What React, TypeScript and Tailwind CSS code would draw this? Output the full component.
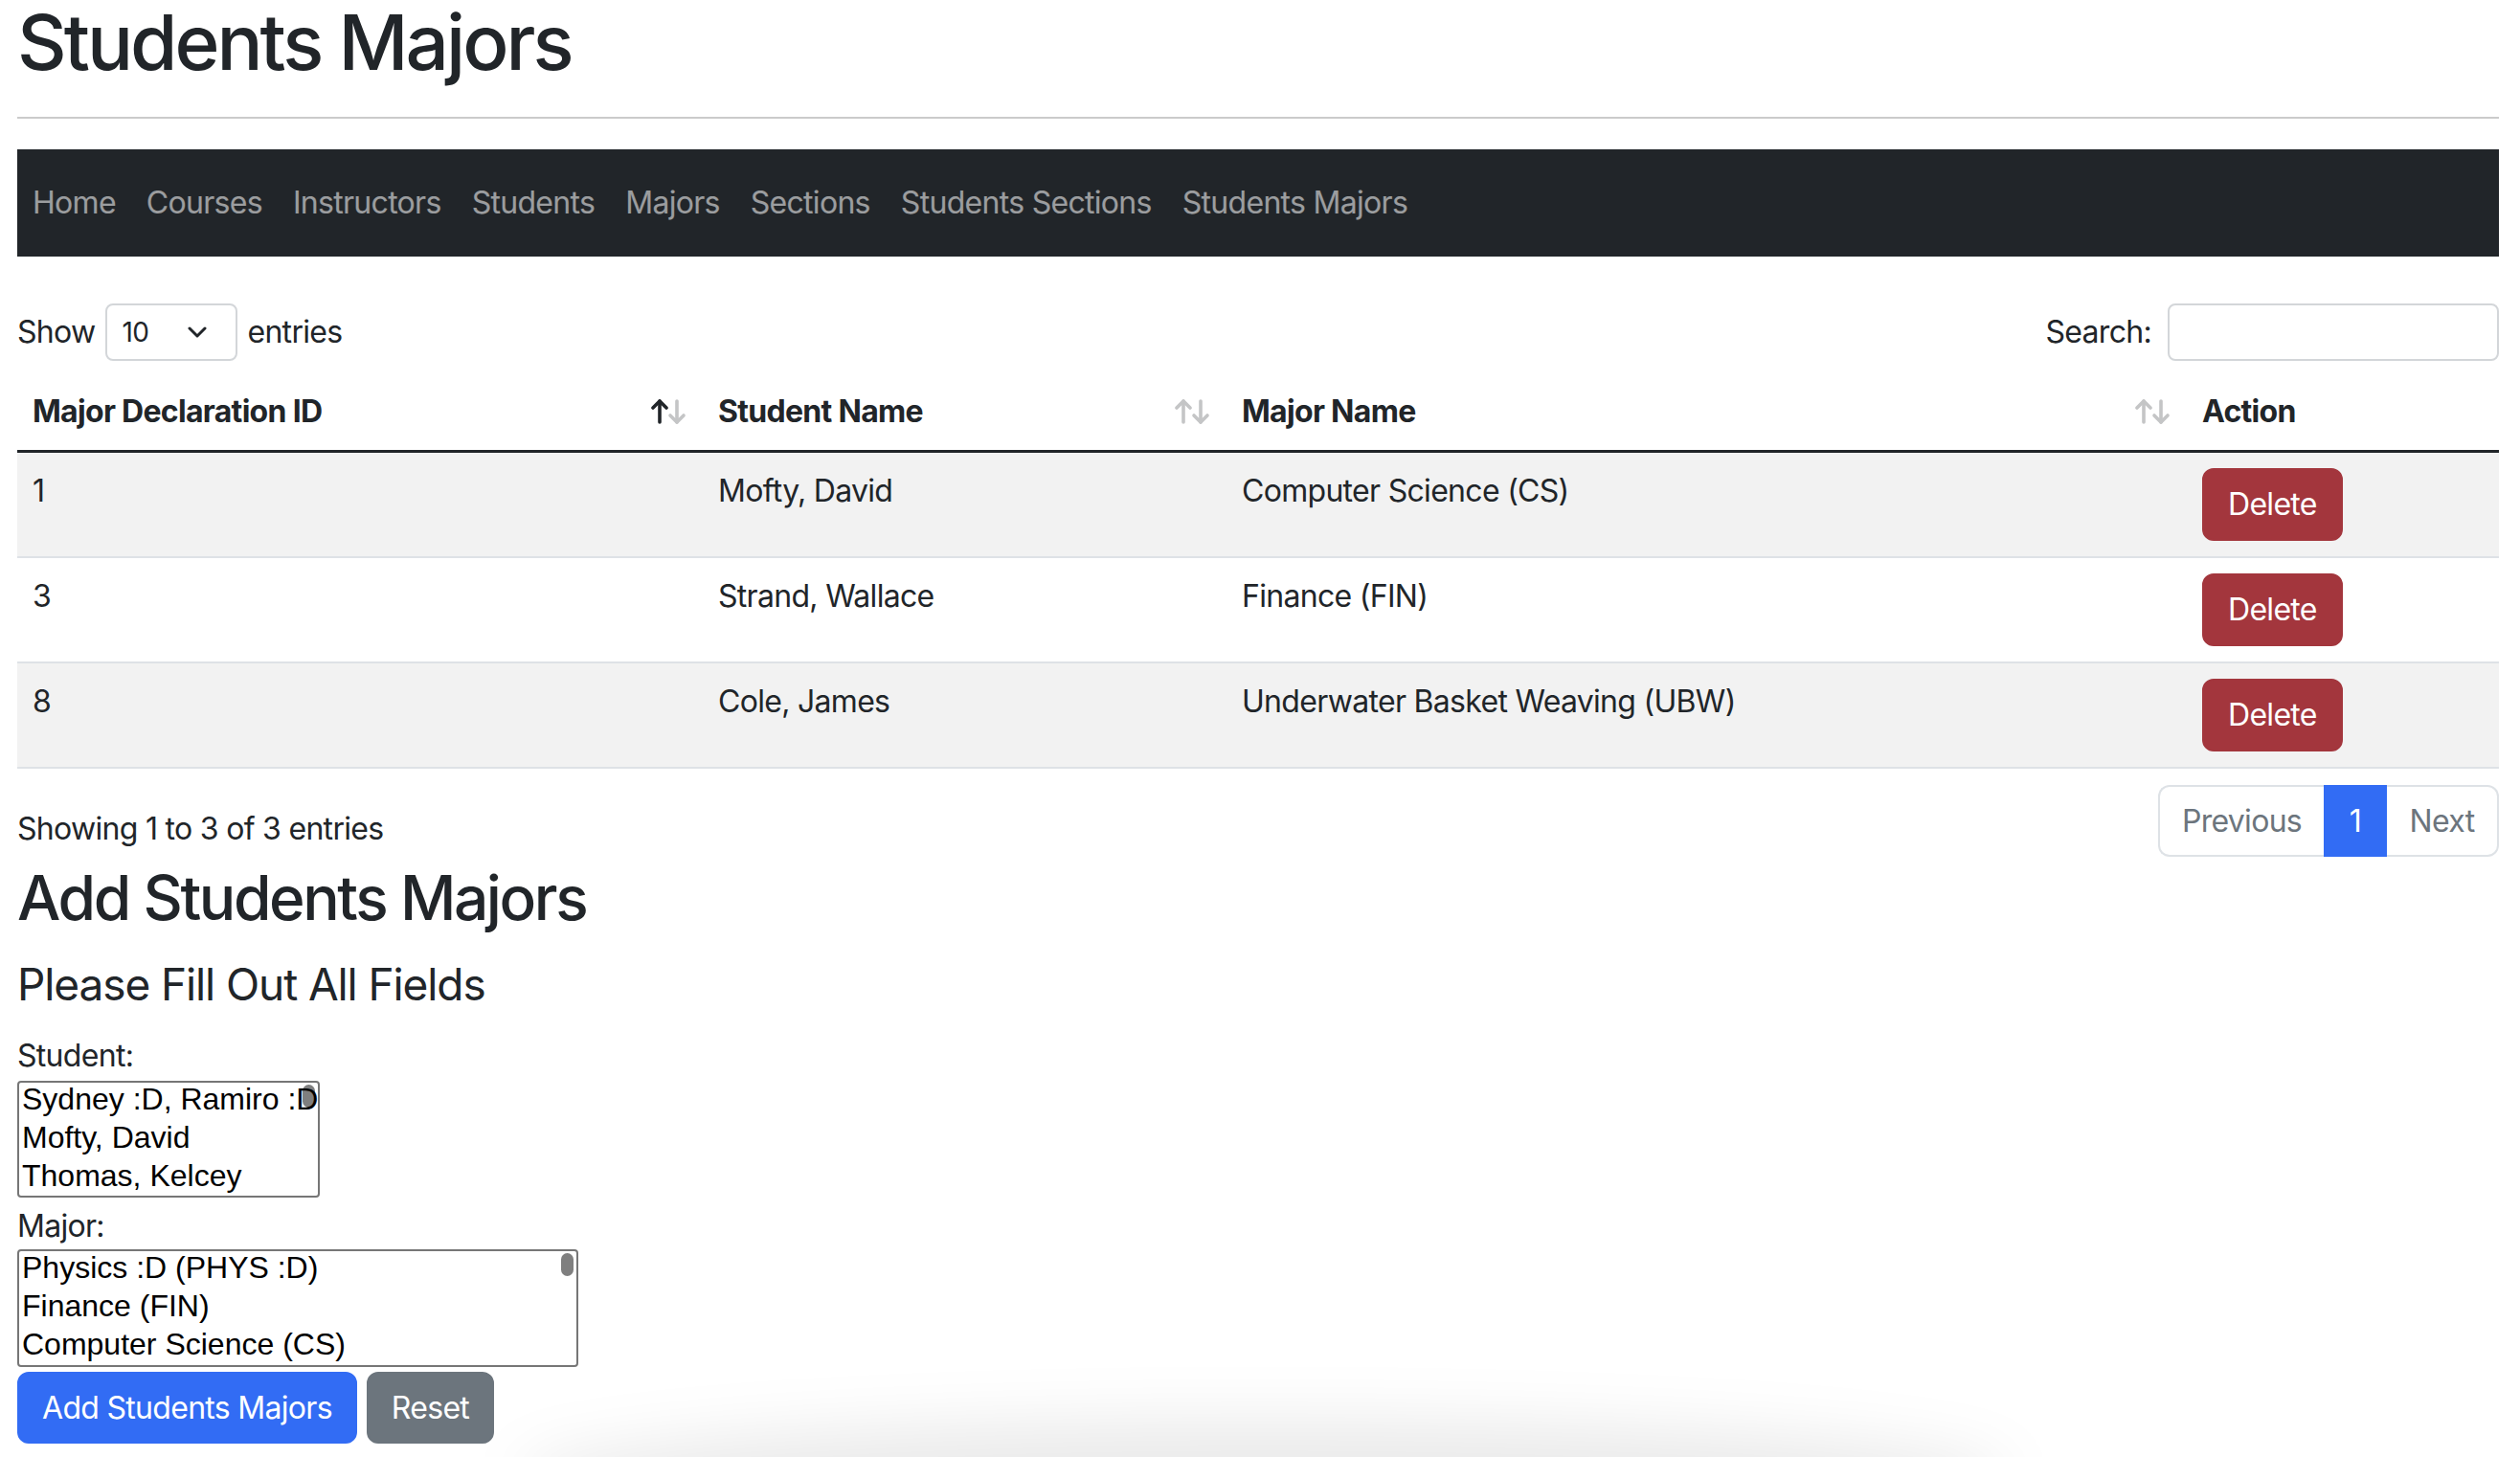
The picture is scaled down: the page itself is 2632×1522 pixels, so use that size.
import React from 'react';

const navLinks = ['Home', 'Courses', 'Instructors', 'Students', 'Majors', 'Sections', 'Students Sections', 'Students Majors'];

const rows = [
  { id: '1', student: 'Mofty, David', major: 'Computer Science (CS)' },
  { id: '3', student: 'Strand, Wallace', major: 'Finance (FIN)' },
  { id: '8', student: 'Cole, James', major: 'Underwater Basket Weaving (UBW)' },
];

const students = ['Sydney :D, Ramiro :D', 'Mofty, David', 'Thomas, Kelcey'];
const majors = ['Physics :D (PHYS :D)', 'Finance (FIN)', 'Computer Science (CS)'];

const SortIcon: React.FC<{ active?: boolean }> = ({ active }) => (
  <svg width="38" height="28" viewBox="0 0 38 28" fill="none" strokeWidth="3.6" strokeLinecap="round" strokeLinejoin="round">
    <g stroke={active ? '#212529' : '#c4c5c6'}>
      <path d="M9 25V3" />
      <path d="M2 10L9 3L16 10" />
    </g>
    <g stroke="#c4c5c6">
      <path d="M27 3V25" />
      <path d="M20 18L27 25L34 18" />
    </g>
  </svg>
);

const ListBox: React.FC<{ items: string[]; width: string; height: string }> = ({ items, width, height }) => (
  <div className={`relative ${width} ${height} overflow-hidden rounded-[4px] border-2 border-[#767676] bg-white pl-[3px] font-['Liberation_Sans',Arial,sans-serif] text-[32px] leading-[40px] tracking-normal text-black`}>
    <div className="absolute right-[3px] top-[2px] h-[24px] w-[13px] rounded-full bg-[#7f7f7f]" />
    <div className="relative -top-[3px]">
      {items.map((s) => (
        <div key={s} className="whitespace-nowrap">{s}</div>
      ))}
    </div>
  </div>
);

export default function App() {
  return (
    <div className="relative min-h-[1522px] overflow-hidden bg-white pl-[18px] pr-[22px] font-['Inter','Noto_Sans',sans-serif] text-[32px] leading-[48px] tracking-[-0.7px] text-[#212529]">
      <h1 className="text-[80px] font-medium leading-[88px] tracking-[-3px]">Students Majors</h1>
      <div className="mt-[34px] h-[2px] bg-[#cbcbcb]" />

      <nav className="mt-[32px] flex h-[112px] items-center bg-[#212529]">
        {navLinks.map((l) => (
          <a key={l} className="px-[16px] text-white/55">{l}</a>
        ))}
      </nav>

      <div className="mt-[49px] flex h-[60px] items-center justify-between">
        <div className="flex items-center">
          <span>Show</span>
          <div className="ml-[11px] mr-[10px] flex h-[60px] w-[138px] items-center justify-between rounded-[8px] border-2 border-[#d3d6d9] pl-[15px] pr-[30px] text-[28px]">
            <span>10</span>
            <svg width="20" height="12" viewBox="0 0 20 12" fill="none" stroke="#212529" strokeWidth="3" strokeLinecap="round" strokeLinejoin="round">
              <path d="M2 2L10 10L18 2" />
            </svg>
          </div>
          <span>entries</span>
        </div>
        <div className="flex items-center">
          <span>Search:</span>
          <div className="ml-[17px] h-[60px] w-[346px] rounded-[8px] border-2 border-[#d3d6d9]" />
        </div>
      </div>

      <table className="mt-[13px] w-full table-fixed border-collapse">
        <thead>
          <tr className="border-b-[3px] border-[#212529]">
            <th className="w-[716px] p-[16px] text-left font-bold">
              <div className="flex items-center justify-between">
                <span>Major Declaration ID</span>
                <SortIcon active />
              </div>
            </th>
            <th className="w-[547px] p-[16px] text-left font-bold">
              <div className="flex items-center justify-between">
                <span>Student Name</span>
                <SortIcon />
              </div>
            </th>
            <th className="w-[1003px] p-[16px] text-left font-bold">
              <div className="flex items-center justify-between">
                <span>Major Name</span>
                <SortIcon />
              </div>
            </th>
            <th className="p-[16px] text-left font-bold">Action</th>
          </tr>
        </thead>
        <tbody>
          {rows.map((r, i) => (
            <tr key={r.id} className={`border-b-2 border-[#dee2e6] ${i % 2 === 0 ? 'bg-[#f2f2f2]' : 'bg-white'}`}>
              <td className="p-[16px] align-top">{r.id}</td>
              <td className="p-[16px] align-top">{r.student}</td>
              <td className="p-[16px] align-top">{r.major}</td>
              <td className="p-[16px] align-top">
                <button className="h-[76px] rounded-[12px] border-2 border-[#a3363d] bg-[#a3363d] px-[25px] text-white">Delete</button>
              </td>
            </tr>
          ))}
        </tbody>
      </table>

      <div className="flex items-start justify-between">
        <div className="pt-[39px]">Showing 1 to 3 of 3 entries</div>
        <div className="mt-[17px] flex h-[75px]">
          <div className="flex w-[173px] items-center justify-center rounded-l-[12px] border-2 border-r-0 border-[#dee2e6] text-[#6c757d]">Previous</div>
          <div className="flex w-[66px] items-center justify-center bg-[#326cf4] text-white">1</div>
          <div className="flex w-[117px] items-center justify-center rounded-r-[12px] border-2 border-l-0 border-[#dee2e6] text-[#6c757d]">Next</div>
        </div>
      </div>

      <h2 className="mt-[4px] text-[64px] font-medium leading-[77px] tracking-[-2.4px]">Add Students Majors</h2>
      <h4 className="mt-[25px] text-[46px] font-normal leading-[55px] tracking-[-1.1px]">Please Fill Out All Fields</h4>

      <div className="mt-[23px]">Student:</div>
      <div className="mt-[2px]">
        <ListBox items={students} width="w-[316px]" height="h-[122px]" />
      </div>
      <div className="mt-[6px]">Major:</div>
      <div>
        <ListBox items={majors} width="w-[586px]" height="h-[123px]" />
      </div>

      <div className="mt-[5px] flex gap-[10px]">
        <button className="h-[75px] rounded-[12px] border-2 border-[#326cf4] bg-[#326cf4] px-[24px] text-white">Add Students Majors</button>
        <button className="h-[75px] rounded-[12px] border-2 border-[#6c757d] bg-[#6c757d] px-[24px] text-white">Reset</button>
      </div>

      <div className="pointer-events-none absolute bottom-[-80px] left-[540px] h-[120px] w-[1560px] rounded-[50%] bg-black/[0.08] blur-[30px]" />
    </div>
  );
}
